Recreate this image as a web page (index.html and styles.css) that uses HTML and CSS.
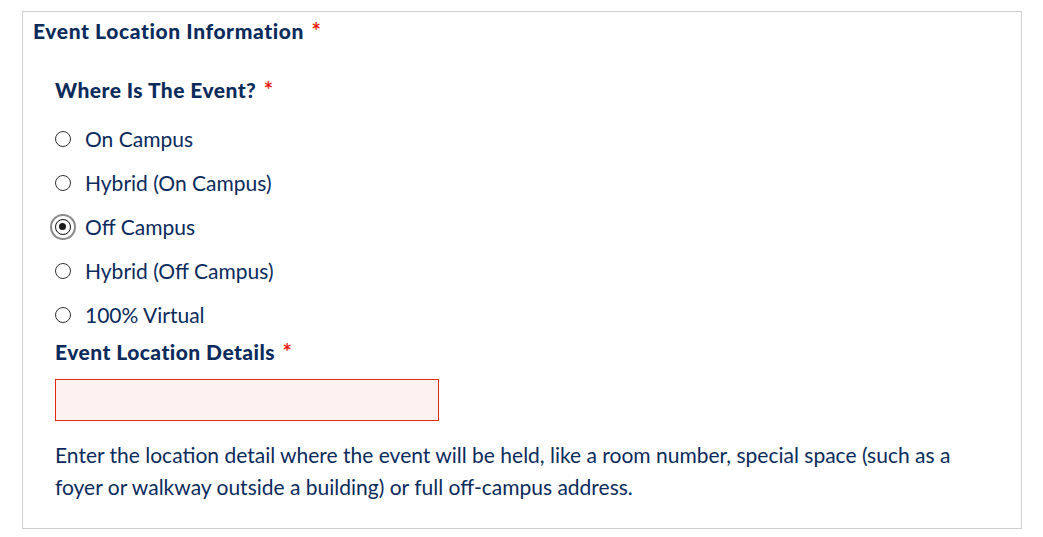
FILE: index.html
```html
<!DOCTYPE html>
<html>
<head>
<meta charset="utf-8">
<link rel="stylesheet" href="styles.css">
</head>
<body>
<div class="page">
  <section class="panel">
    <h2 class="panel-title">Event Location Information <span class="req">*</span></h2>
    <div class="group">
      <h3 class="q-title">Where Is The Event? <span class="req">*</span></h3>
      <ul class="radios">
        <li class="radio-row"><span class="radio"></span><span class="radio-label">On Campus</span></li>
        <li class="radio-row"><span class="radio"></span><span class="radio-label">Hybrid (On Campus)</span></li>
        <li class="radio-row"><span class="radio checked"></span><span class="radio-label">Off Campus</span></li>
        <li class="radio-row"><span class="radio"></span><span class="radio-label">Hybrid (Off Campus)</span></li>
        <li class="radio-row"><span class="radio"></span><span class="radio-label">100% Virtual</span></li>
      </ul>
      <h3 class="q-title details">Event Location Details <span class="req">*</span></h3>
      <div class="text-input"></div>
      <p class="help">Enter the location detail where the event will be held, like a room number, special space (such as a foyer or walkway outside a building) or full off-campus address.</p>
    </div>
  </section>
</div>
</body>
</html>
```
FILE: styles.css
```css
html, body {
  margin: 0;
  padding: 0;
  background: #ffffff;
}
.page {
  padding: 11px 0 0 22px;
}
.panel {
  box-sizing: border-box;
  width: 1000px;
  height: 518px;
  border: 1px solid #cfcfcf;
  padding: 7px 10px 0 10px;
  color: #0b2b5c;
  font-family: Lato, "Liberation Sans", sans-serif;
}
.panel-title {
  margin: 0;
  font-size: 21px;
  line-height: 24px;
  font-weight: 900;
  letter-spacing: 0.6px;
}
.req {
  color: #e8190c;
  font-weight: 700;
  font-size: 22px;
  margin-left: 2px;
  letter-spacing: 0;
}
.group {
  padding-left: 22px;
  padding-top: 35px;
}
.q-title {
  margin: 0;
  font-size: 21px;
  line-height: 24px;
  font-weight: 900;
  letter-spacing: 0.45px;
}
.radios {
  list-style: none;
  margin: 25px 0 0 0;
  padding: 0;
  display: flex;
  flex-direction: column;
  gap: 20px;
}
.radio-row {
  display: flex;
  align-items: center;
  height: 24px;
}
.radio {
  box-sizing: border-box;
  width: 16px;
  height: 16px;
  border: 1px solid #333;
  border-radius: 50%;
  margin-right: 14px;
  position: relative;
  flex: none;
}
.radio.checked {
  border: 1.5px solid #1a1a1a;
  box-shadow: 0 0 0 3px #fff, 0 0 0 5px #8a8a8a;
}
.radio.checked::after {
  content: "";
  position: absolute;
  left: 3px;
  top: 3px;
  width: 7px;
  height: 7px;
  border-radius: 50%;
  background: #1a1a1a;
}
.radio-label {
  font-size: 21px;
  line-height: 24px;
}
.details {
  margin-top: 13px;
}
.text-input {
  box-sizing: border-box;
  width: 384px;
  height: 42px;
  margin-top: 15px;
  border: 1px solid #e2280e;
  background: #fdf2f0;
}
.help {
  margin: 18px 0 0 0;
  font-size: 21px;
  line-height: 32px;
  max-width: 930px;
}
```
